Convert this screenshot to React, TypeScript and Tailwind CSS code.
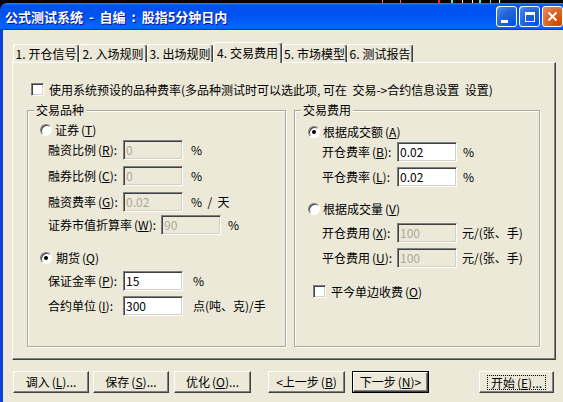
import React from 'react';

// mnemonic key, e.g. (R) with the letter underlined
const K = ({ k }: { k: string }) => (
  <span className="ml-[2px]">
    (<u className="underline-offset-[1px]">{k}</u>)
  </span>
);

const Radio = ({ on }: { on?: boolean }) => (
  <span className="flex h-[12px] w-[12px] shrink-0 items-center justify-center rounded-full border border-t-[#808080] border-l-[#808080] border-b-white border-r-white bg-white shadow-[inset_1px_1px_0_#404040]">
    {on && <span className="h-[4px] w-[4px] rounded-full bg-black" />}
  </span>
);

const Check = () => (
  <span className="h-[13px] w-[13px] shrink-0 border border-t-[#808080] border-l-[#808080] border-b-white border-r-white bg-white shadow-[inset_1px_1px_0_#404040,inset_-1px_-1px_0_#d4d0c8]" />
);

const Field = ({ v, off, w = 'w-[60px]' }: { v: string; off?: boolean; w?: string }) => (
  <div
    className={`flex h-[20px] ${w} shrink-0 items-center border border-t-[#808080] border-l-[#808080] border-b-white border-r-white pl-[2px] shadow-[inset_1px_1px_0_#404040,inset_-1px_-1px_0_#d4d0c8] ${
      off ? 'bg-[#ECE9D8] text-[#aca899]' : 'bg-white text-black'
    }`}
  >
    {v}
  </div>
);

interface RowProps {
  label: React.ReactNode;
  lw: string;
  v: string;
  off?: boolean;
  unit: string;
  mt: string;
  ul?: string;
}

const Row = ({ label, lw, v, off, unit, mt, ul = 'ml-[8px]' }: RowProps) => (
  <div className={`flex h-[20px] items-center ${mt}`}>
    <span className={`${lw} shrink-0 whitespace-nowrap`}>{label}</span>
    <Field v={v} off={off} />
    <span className={`${ul} whitespace-pre`}>{unit}</span>
  </div>
);

const Tab = ({ n, label, w, active }: { n: string; label: string; w: string; active?: boolean }) => (
  <div
    className={`relative flex ${w} items-center justify-center rounded-t-[3px] border-l border-t border-r border-l-white border-t-white border-r-[#404040] bg-[#ECE9D8] shadow-[inset_-1px_0_0_#808080] whitespace-nowrap ${
      active ? 'z-10 mb-[-1px] h-[21px] pb-[1px]' : 'h-[18px] pt-[1px]'
    }`}
  >
    <span className="mr-[3px]">{n}.</span>
    {label}
  </div>
);

const Btn = ({ children, w = 'w-[76px]', ml }: { children: React.ReactNode; w?: string; ml: string }) => (
  <div
    className={`flex h-[22px] ${w} ${ml} shrink-0 items-center justify-center border border-t-white border-l-white border-b-[#404040] border-r-[#404040] bg-[#ECE9D8] shadow-[inset_-1px_-1px_0_#808080] whitespace-nowrap`}
  >
    {children}
  </div>
);

const Group = ({ title, w, tx, children }: { title: string; w: string; tx: string; children: React.ReactNode }) => (
  <div className={`relative flex ${w} h-[237px] flex-col border border-[#aca899] shadow-[inset_1px_1px_0_#fff,1px_1px_0_#fff]`}>
    <span className={`absolute -top-[8px] ${tx} bg-[#ECE9D8] px-[2px]`}>{title}</span>
    {children}
  </div>
);

const TitleBtn = ({ kind }: { kind: 'min' | 'max' | 'close' }) => (
  <div
    className={`flex h-[21px] w-[21px] items-center justify-center rounded-[3px] border border-white ${
      kind === 'close'
        ? 'bg-[radial-gradient(circle_at_90%_90%,#cc4600_0%,#dc6527_55%,#e5936c_100%)]'
        : 'bg-[radial-gradient(circle_at_90%_90%,#0054e9_0%,#2263d5_55%,#4484f5_90%,#fff_100%)]'
    }`}
  >
    {kind === 'min' && <span className="mt-[9px] mr-[5px] h-[3px] w-[7px] bg-white" />}
    {kind === 'max' && <span className="h-[10px] w-[10px] border border-t-[3px] border-white" />}
    {kind === 'close' && (
      <svg width="11" height="11" viewBox="0 0 11 11">
        <path d="M1.5 1.5 L9.5 9.5 M9.5 1.5 L1.5 9.5" stroke="#fff" strokeWidth="2" />
      </svg>
    )}
  </div>
);

export default function App() {
  return (
    <div className="h-[402px] w-[563px] overflow-hidden bg-black text-[12px] leading-[14px] text-black font-[family-name:'Noto_Sans_CJK_SC','Noto_Sans',sans-serif]">
      {/* desktop chart peeking above the window */}
      <div className="flex h-[3px]">
        <span className="ml-[382px] w-[1px] bg-[#ff6090]" />
        <span className="ml-[17px] w-[1px] bg-[#ff6090]" />
        <span className="ml-[37px] w-[2px] bg-[#ff2020]" />
        <span className="ml-[11px] w-[2px] bg-[#40e0ff]" />
        <span className="ml-[9px] w-[1px] bg-white" />
        <span className="ml-[9px] w-[1px] bg-white" />
        <span className="ml-[6px] w-[2px] bg-[#40e0ff]" />
        <span className="ml-[9px] w-[1px] bg-[#40e0ff]" />
        <span className="ml-[8px] w-[1px] bg-white" />
      </div>

      <div className="w-[572px]">
        {/* title bar */}
        <div className="flex h-[27px] items-center rounded-t-[7px] bg-[linear-gradient(180deg,#0997ff_0%,#0053ee_8%,#0050ee_40%,#0066ff_88%,#0066ff_93%,#005bff_95%,#003dd7_96%,#003dd7_100%)] pl-[5px]">
          <span className="text-[13px] font-bold text-white [text-shadow:1px_1px_#0f1089] whitespace-pre">
            {'公式测试系统  -  自编  :  股指5分钟日内'}
          </span>
          <div className="ml-auto mr-[9px] flex gap-[2px]">
            <TitleBtn kind="min" />
            <TitleBtn kind="max" />
            <TitleBtn kind="close" />
          </div>
        </div>

        {/* window body */}
        <div className="flex h-[372px] flex-col border-l-[3px] border-[#0b45d6] bg-[#ECE9D8] pl-[9px] pt-[12px]">
          {/* tabs */}
          <div className="relative z-10 flex h-[20px] items-end pl-[1px]">
            <Tab n="1" label="开仓信号" w="w-[66px]" />
            <Tab n="2" label="入场规则" w="w-[68px]" />
            <Tab n="3" label="出场规则" w="w-[66px]" />
            <Tab n="4" label="交易费用" w="w-[69px]" active />
            <Tab n="5" label="市场模型" w="w-[65px]" />
            <Tab n="6" label="测试报告" w="w-[66px]" />
          </div>

          {/* tab page */}
          <div className="flex h-[298px] w-[544px] flex-col border border-t-white border-l-white border-b-[#404040] border-r-[#404040] pt-[20px] shadow-[inset_-1px_-1px_0_#808080]">
            <div className="flex h-[13px] items-center pl-[18px]">
              <Check />
              <span className="ml-[5px] whitespace-pre">
                {'使用系统预设的品种费率(多品种测试时可以选此项, 可在  交易->合约信息设置  设置)'}
              </span>
            </div>

            <div className="mt-[14px] flex gap-[8px] pl-[14px]">
              <Group title="交易品种" w="w-[259px]" tx="left-[6px]">
                <div className="mt-[12px] flex h-[13px] items-center pl-[12px]">
                  <Radio />
                  <span className="ml-[3px]">
                    证券<K k="T" />
                  </span>
                </div>
                <div className="pl-[20px]">
                  <Row label={<>融资比例<K k="R" />:</>} lw="w-[75px]" v="0" off unit="%" mt="mt-[4px]" />
                  <Row label={<>融券比例<K k="C" />:</>} lw="w-[75px]" v="0" off unit="%" mt="mt-[6px]" />
                  <Row label={<>融资费率<K k="G" />:</>} lw="w-[75px]" v="0.02" off unit="%  /  天" mt="mt-[6px]" />
                  <Row label={<>证券市值折算率<K k="W" />:</>} lw="w-[113px]" v="90" off unit="%" mt="mt-[3px]" ul="ml-[7px]" />
                </div>
                <div className="mt-[16px] flex h-[13px] items-center pl-[12px]">
                  <Radio on />
                  <span className="ml-[4px]">
                    期货<K k="Q" />
                  </span>
                </div>
                <div className="pl-[20px]">
                  <Row label={<>保证金率<K k="P" />:</>} lw="w-[75px]" v="15" unit="%" mt="mt-[7px]" ul="ml-[10px]" />
                  <Row label={<>合约单位<K k="I" />:</>} lw="w-[75px]" v="300" unit="点(吨、克)/手" mt="mt-[5px]" ul="ml-[10px]" />
                </div>
              </Group>

              <Group title="交易费用" w="w-[246px]" tx="left-[6px]">
                <div className="mt-[14px] flex h-[13px] items-center pl-[13px]">
                  <Radio on />
                  <span className="ml-[3px]">
                    根据成交额<K k="A" />
                  </span>
                </div>
                <div className="pl-[27px]">
                  <Row label={<>开仓费率<K k="B" />:</>} lw="w-[75px]" v="0.02" unit="%" mt="mt-[4px]" ul="ml-[6px]" />
                  <Row label={<>平仓费率<K k="L" />:</>} lw="w-[75px]" v="0.02" unit="%" mt="mt-[5px]" ul="ml-[6px]" />
                </div>
                <div className="mt-[15px] flex h-[13px] items-center pl-[13px]">
                  <Radio />
                  <span className="ml-[3px]">
                    根据成交量<K k="V" />
                  </span>
                </div>
                <div className="pl-[27px]">
                  <Row label={<>开仓费用<K k="X" />:</>} lw="w-[75px]" v="100" off unit="元/(张、手)" mt="mt-[8px]" ul="ml-[5px]" />
                  <Row label={<>平仓费用<K k="U" />:</>} lw="w-[75px]" v="100" off unit="元/(张、手)" mt="mt-[5px]" ul="ml-[5px]" />
                </div>
                <div className="mt-[17px] flex h-[13px] items-center pl-[18px]">
                  <Check />
                  <span className="ml-[5px]">
                    平今单边收费<K k="O" />
                  </span>
                </div>
              </Group>
            </div>
          </div>

          {/* bottom buttons */}
          <div className="mt-[11px] flex">
            <Btn ml="ml-[1px]">
              调入<K k="L" />...
            </Btn>
            <Btn ml="ml-[4px]">
              保存<K k="S" />...
            </Btn>
            <Btn ml="ml-[5px]" w="w-[77px]">
              优化<K k="O" />...
            </Btn>
            <Btn ml="ml-[17px]" w="w-[77px]">
              &lt;上一步<K k="B" />
            </Btn>
            <div className="ml-[7px] flex h-[22px] w-[77px] shrink-0 border border-black">
              <div className="flex flex-1 items-center justify-center border border-t-white border-l-white border-b-[#404040] border-r-[#404040] shadow-[inset_-1px_-1px_0_#808080] whitespace-nowrap">
                下一步<K k="N" />&gt;
              </div>
            </div>
            <Btn ml="ml-[50px]" w="w-[75px]">
              <span className="border border-dotted border-black px-[3px] leading-[13px]">
                开始<K k="E" />...
              </span>
            </Btn>
          </div>
        </div>
      </div>
    </div>
  );
}
